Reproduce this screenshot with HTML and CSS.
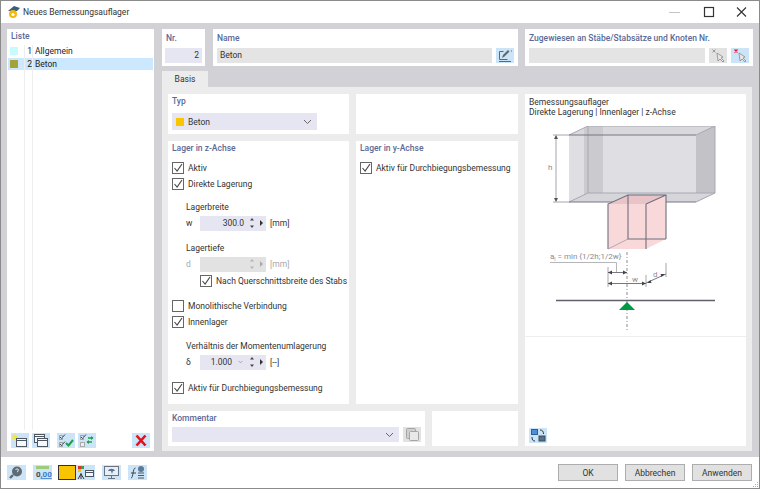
FILE: index.html
```html
<!DOCTYPE html>
<html lang="de">
<head>
    <meta charset="UTF-8">
    <title>Neues Bemessungsauflager</title>
    <link rel="stylesheet" href="styles.css">
</head>
<body>
<svg class="defs" width="0" height="0">
    <symbol id="tick" viewBox="0 0 12 12"><path d="M2.500 6l2.600 3L10 2" fill="none" stroke="#444" stroke-width="1.100"/></symbol>
    <symbol id="updown" viewBox="0 0 8 14"><path d="M4 2L2 4.500h4zM4 12l-2-2.500h4z" fill="currentColor"/></symbol>
    <symbol id="cursor" viewBox="0 0 18 18"><path d="M8 6l1 8 2-2 3 3 1-1-3-3 2-1z" fill="#e8e8e8" stroke="#8a8a8a" stroke-width=".8"/></symbol>
</svg>
<div class="window">
    <!-- title bar -->
    <div class="titlebar">
        <svg class="app-icon" width="14" height="14" viewBox="0 0 14 14">
            <path d="M1 6l6-5 6 2-3 3z" fill="#3a5f7a"/>
            <circle cx="6" cy="9" r="4" fill="#f2b90f"/>
            <circle cx="6" cy="9.500" r="1.600" fill="#fff"/>
        </svg>
        <span class="title">Neues Bemessungsauflager</span>
        <div class="win-btns">
            <svg width="33" height="14" viewBox="0 0 33 14"><path d="M10 7.500h11" stroke="#c4c4c4"/></svg>
            <svg width="33" height="14" viewBox="0 0 33 14"><rect x="12.500" y="2.500" width="9" height="9" fill="none" stroke="#333" stroke-width="1.200"/></svg>
            <svg width="33" height="14" viewBox="0 0 33 14"><path d="M12 2.500l9 9M21 2.500l-9 9" stroke="#333" stroke-width="1.100"/></svg>
        </div>
    </div>

    <div class="main">
        <!-- list on the left -->
        <div class="list-panel">
            <div class="heading">Liste</div>
            <div class="list-row">
                <span class="cell-swatch"><i class="swatch swatch-cyan"></i></span>
                <span class="cell-num">1</span>
                <span class="cell-name">Allgemein</span>
            </div>
            <div class="list-row selected">
                <span class="cell-swatch"><i class="swatch swatch-olive"></i></span>
                <span class="cell-num">2</span>
                <span class="cell-name">Beton</span>
            </div>
            <div class="list-row list-fill">
                <span class="cell-swatch"></span>
                <span class="cell-num"></span>
                <span class="cell-name"></span>
            </div>
            <div class="list-tools">
                <button class="icon-btn">
                    <svg width="18" height="15" viewBox="0 0 18 15"><path d="M4 0l1 2.500L7.500 2 6 4l1.500 2L5 5.500 4 8 3 5.500.5 6 2 4 .5 2 3 2.500z" fill="#f2e640"/><rect x="5.500" y="5.500" width="10" height="8" fill="#f4f8fb" stroke="#4d5560"/><path d="M5.500 7.500h10" stroke="#4d5560"/></svg>
                </button>
                <button class="icon-btn">
                    <svg width="18" height="15" viewBox="0 0 18 15"><rect x="2.500" y="1.500" width="10" height="8" fill="#f4f8fb" stroke="#4d5560"/><path d="M2.500 3.500h10" stroke="#4d5560"/><rect x="5.500" y="5.500" width="10" height="8" fill="#f4f8fb" stroke="#4d5560"/><path d="M5.500 7.500h10" stroke="#4d5560"/></svg>
                </button>
                <button class="icon-btn push">
                    <svg width="18" height="15" viewBox="0 0 18 15"><path d="M3 4l1.500 1.500L8 1.500M3 11l1.500 1.500L8 8.500" fill="none" stroke="#444"/><path d="M2.500 2.500h3v4h-3zM2.500 9.500h3v4h-3z" fill="none" stroke="#888" stroke-width=".7"/><path d="M9 10l2.500 2.500L16 7" fill="none" stroke="#1fa04a" stroke-width="2"/></svg>
                </button>
                <button class="icon-btn">
                    <svg width="18" height="15" viewBox="0 0 18 15"><path d="M3 4l1.500 1.500L8 1.500" fill="none" stroke="#444"/><path d="M2.500 2.500h3v4h-3z" fill="none" stroke="#888" stroke-width=".7"/><rect x="2.500" y="9.500" width="4" height="4" fill="#eee" stroke="#aaa"/><path d="M10 5h5M14 9H9" stroke="#1fa04a" stroke-width="1.500"/><path d="M13 3l2.500 2L13 7zM11 7L8.500 9l2.500 2z" fill="#1fa04a"/></svg>
                </button>
                <button class="icon-btn delete">
                    <svg width="18" height="15" viewBox="0 0 18 15"><path d="M4.500 2.500l9 10M13.500 2.500l-9 10" stroke="#e3101c" stroke-width="2.600"/></svg>
                </button>
            </div>
        </div>

        <div class="content">
            <!-- number, name, assignment -->
            <div class="top-row">
                <div class="box box-nr">
                    <div class="heading">Nr.</div>
                    <div class="field field-nr">2</div>
                </div>
                <div class="box">
                    <div class="heading">Name</div>
                    <div class="field-line">
                        <div class="field field-grey">Beton</div>
                        <button class="icon-btn">
                            <svg width="18" height="15" viewBox="0 0 18 15"><path d="M7.500 3.500h-4v8h8M3 13.500h12" fill="none" stroke="#666"/><path d="M6 10l1-3 5-5 1.500 1.500-5 5z" fill="#666"/><path d="M15.500 2.500v1" stroke="#666"/></svg>
                        </button>
                    </div>
                </div>
                <div class="box">
                    <div class="heading">Zugewiesen an Stäbe/Stabsätze und Knoten Nr.</div>
                    <div class="field-line">
                        <div class="field field-grey"></div>
                        <button class="icon-btn icon-btn-off">
                            <svg width="18" height="15" viewBox="0 0 18 15"><path d="M3.500 1.500l3 3M6.500 1.500l-3 3" stroke="#999"/><use href="#cursor" y="-1" width="18" height="18"/></svg>
                        </button>
                        <button class="icon-btn">
                            <svg width="18" height="15" viewBox="0 0 18 15"><path d="M3.500 1.500l3 3M6.500 1.500l-3 3" stroke="#d8182a" stroke-width="1.300"/><use href="#cursor" y="-1" width="18" height="18"/></svg>
                        </button>
                    </div>
                </div>
            </div>

            <div class="tabs"><div class="tab">Basis</div></div>

            <div class="tab-panel">
                <div class="form-side">
                    <div class="form-grid">
                        <div class="panel">
                            <div class="heading">Typ</div>
                            <div class="select">
                                <i class="swatch swatch-yellow"></i>
                                <span>Beton</span>
                                <svg class="chevron" width="9" height="6" viewBox="0 0 9 6"><path d="M1 1l3.500 3.500L8 1" fill="none" stroke="#666"/></svg>
                            </div>
                        </div>
                        <div class="panel"></div>

                        <div class="panel">
                            <div class="heading">Lager in z-Achse</div>
                            <label class="row first"><i class="check"><svg width="12" height="12"><use href="#tick"/></svg></i>Aktiv</label>
                            <label class="row"><i class="check"><svg width="12" height="12"><use href="#tick"/></svg></i>Direkte Lagerung</label>

                            <div class="row indent mt7">Lagerbreite</div>
                            <div class="row indent">
                                <span class="symbol">w</span>
                                <div class="spin">
                                    <span class="spin-value">300.0</span>
                                    <svg class="updown" width="8" height="14"><use href="#updown"/></svg>
                                    <i class="arrow"></i>
                                </div>
                                <span class="unit">[mm]</span>
                            </div>

                            <div class="row indent mt9">Lagertiefe</div>
                            <div class="row indent disabled">
                                <span class="symbol">d</span>
                                <div class="spin spin-off">
                                    <span class="spin-value"></span>
                                    <svg class="updown" width="8" height="14"><use href="#updown"/></svg>
                                    <i class="arrow"></i>
                                </div>
                                <span class="unit">[mm]</span>
                            </div>
                            <label class="row indent-more mt1"><i class="check"><svg width="12" height="12"><use href="#tick"/></svg></i>Nach Querschnittsbreite des Stabs</label>

                            <label class="row mt9"><i class="check"></i>Monolithische Verbindung</label>
                            <label class="row"><i class="check"><svg width="12" height="12"><use href="#tick"/></svg></i>Innenlager</label>

                            <div class="row indent mt8">Verhältnis der Momentenumlagerung</div>
                            <div class="row indent">
                                <span class="symbol">δ</span>
                                <div class="spin">
                                    <span class="spin-value spin-value-short">1.000</span>
                                    <svg class="spin-chevron" width="9" height="6" viewBox="0 0 9 6"><path d="M1 1l3.500 3.500L8 1" fill="none" stroke="#777"/></svg>
                                    <svg class="updown" width="8" height="14"><use href="#updown"/></svg>
                                    <i class="arrow"></i>
                                </div>
                                <span class="unit">[--]</span>
                            </div>

                            <label class="row mt10"><i class="check"><svg width="12" height="12"><use href="#tick"/></svg></i>Aktiv für Durchbiegungsbemessung</label>
                        </div>

                        <div class="panel">
                            <div class="heading">Lager in y-Achse</div>
                            <label class="row first"><i class="check"><svg width="12" height="12"><use href="#tick"/></svg></i>Aktiv für Durchbiegungsbemessung</label>
                        </div>
                    </div>

                    <div class="form-bottom">
                        <div class="panel panel-comment">
                            <div class="heading">Kommentar</div>
                            <div class="field-line">
                                <div class="select select-wide">
                                    <svg class="chevron" width="9" height="6" viewBox="0 0 9 6"><path d="M1 1l3.500 3.500L8 1" fill="none" stroke="#666"/></svg>
                                </div>
                                <button class="icon-btn icon-btn-off">
                                    <svg width="18" height="15" viewBox="0 0 18 15"><rect x="3.500" y="1.500" width="9" height="10" rx="1" fill="#cfcfcf" stroke="#a5a5a5"/><rect x="6.500" y="4.500" width="9" height="9" rx="1" fill="#e8e8e8" stroke="#a5a5a5"/></svg>
                                </button>
                            </div>
                        </div>
                        <div class="panel panel-blank"></div>
                    </div>
                </div>

                <!-- picture on the right -->
                <div class="panel preview">
                    <div class="preview-title">Bemessungsauflager<br>Direkte Lagerung | Innenlager | z-Achse</div>
                    <svg class="drawing" width="221" height="210" viewBox="525 126 221 210">
                        <path d="M588 126h127v67H588z" fill="#d9d9dd"/>
                        <path d="M569 135l19-9v67l-19 9z" fill="#dadade"/>
                        <path d="M569 135h127v67H569z" fill="#dfdfe3"/>
                        <path d="M584 128l4-2h15v67l-19 4z" fill="#cacacf"/>
                        <path d="M696 135l19-9v67l-19 9z" fill="#c2c2c7"/>
                        <path d="M569 202l19-9h127l-19 9z" fill="#d6d6da"/>
                        <path d="M588 193v-67h127v67M569 202l19-9h127M696 135l19-9M696 202l19-9M569 135l19-9" fill="none" stroke="#a8a8b2"/>
                        <path d="M569 135h127M569 202h127" fill="none" stroke="#77778a" stroke-width="1.200"/>

                        <path d="M608 204l20-9h38v44l-20 10h-38z" fill="#f9d8da"/>
                        <path d="M608 204l20-9h38l-20 9z" fill="#e8c4c8"/>
                        <path d="M608 249v-45l20-9h38v44M646 204v45M646 204l20-9M628 195v44h38" fill="none" stroke="#6f6f80" stroke-width="1.100"/>
                        <path d="M628 239l-20 10" fill="none" stroke="#9a9aa6" stroke-width=".8"/>

                        <path d="M553 135h16M553 202h16M556 136v65" stroke="#a5a5ae" fill="none"/>
                        <path d="M556 135l-2 4h4zM556 202l-2-4h4z" fill="#555"/>
                        <text x="548" y="170" class="dim">h</text>

                        <text x="550" y="259" class="dim">a<tspan class="dim-sub" dy="1.500">l</tspan><tspan dy="-1.500"> = min {1/2h;1/2w}</tspan></text>
                        <path d="M550 262.500h66.500V272" stroke="#b5b5bc" fill="none"/>
                        <path d="M627 252v78" stroke="#8a8a94" stroke-dasharray="3 2 1 2" fill="none"/>
                        <path d="M608 267v20M646 275v12M666 263v14" stroke="#a5a5ae" fill="none"/>
                        <path d="M608 272.500h19M608 283.500h38M646 283l20-9" stroke="#777784" fill="none"/>
                        <path d="M608 272.500l4-2v4zM627 272.500l-4-2v4zM608 283.500l4-2v4zM646 283.500l-4-2v4zM647 283l3.500-3 1 3zM665 274l-3.500 3-1-3z" fill="#444"/>
                        <text x="632" y="282" class="dim">w</text>
                        <text x="653" y="277" class="dim">d</text>
                        <path d="M556 300.500h159" stroke="#5f5f6e" stroke-width="1.500"/>
                        <path d="M627 302l8 8h-16z" fill="#009a44"/>
                    </svg>
                    <div class="preview-bottom">
                        <button class="icon-btn">
                            <svg width="18" height="15" viewBox="0 0 18 15"><rect x="2.500" y="1.500" width="6" height="5" fill="#4f8fd6" stroke="#2f5f9a"/><rect x="10" y="8" width="6" height="5" fill="#59708a" stroke="#3a4a5a"/><path d="M11 2c2.500 0 3.500 1.500 3.500 4M6 13c-2 0-3-1-3-4" fill="none" stroke="#333"/></svg>
                        </button>
                    </div>
                </div>
            </div>
        </div>
    </div>

    <!-- bottom bar -->
    <div class="footer">
        <button class="icon-btn foot-btn">
            <svg width="19" height="15" viewBox="0 0 19 15"><circle cx="10" cy="6.500" r="5" fill="#606a72"/><path d="M6 10l-3 3" stroke="#606a72" stroke-width="2.400"/><path d="M8.500 5c.5-1.500 3-1.500 3 0 0 1-1.200 1-1.200 2.200" fill="none" stroke="#dcecf8"/></svg>
        </button>
        <button class="icon-btn foot-btn foot-gap">
            <svg width="19" height="15" viewBox="0 0 19 15"><rect x="3" y="1" width="13" height="3" fill="#9ccc7c"/><text x="3" y="12" class="zero">0<tspan class="zero-blue">,00</tspan></text></svg>
        </button>
        <span class="color-chip"></span>
        <button class="icon-btn foot-btn foot-gap">
            <svg width="19" height="15" viewBox="0 0 19 15"><rect x="2" y="1" width="3" height="3" fill="#d9352b"/><rect x="5" y="1" width="3" height="3" fill="#38a048"/><rect x="2" y="4" width="3" height="3" fill="#f0c020"/><path d="M5 8v6M2 14l3-5 3 5" fill="none" stroke="#333"/><rect x="9.500" y="5.500" width="8" height="6" fill="#f4f8fb" stroke="#4d5560"/><path d="M9.500 7.500h8" stroke="#4d5560"/></svg>
        </button>
        <button class="icon-btn foot-btn foot-gap">
            <svg width="19" height="15" viewBox="0 0 19 15"><rect x="2.500" y="1.500" width="14" height="9" fill="#e8eef4" stroke="#6a7480"/><path d="M6 6c1-3 6-3 7 0l-2 0-1 3-1-3z" fill="#52779c"/><path d="M9.500 10.500v3M6 13.500h7" stroke="#6a7480"/></svg>
        </button>
        <button class="icon-btn foot-btn">
            <svg width="19" height="15" viewBox="0 0 19 15"><path d="M3 13c2.500 0 1.500-10 4.500-10M3 8h5" fill="none" stroke="#444"/><circle cx="13" cy="4" r="3" fill="#5a7a9c"/><path d="M10 8h6M10 10.500h6M10 13h6" stroke="#555"/></svg>
        </button>
        <div class="footer-btns">
            <button class="btn">OK</button>
            <button class="btn">Abbrechen</button>
            <button class="btn">Anwenden</button>
        </div>
        <svg class="grip" width="6" height="6" viewBox="0 0 6 6"><path d="M4 0h1v1H4zM2 2h1v1H2zM4 2h1v1H4zM0 4h1v1H0zM2 4h1v1H2zM4 4h1v1H4z" fill="#b0b0b0"/></svg>
    </div>
</div>
</body>
</html>
```

FILE: styles.css
```css
html, body {
    margin: 0;
    padding: 0;
    width: 760px;
    height: 489px;
    overflow: hidden;
}

body {
    font-family: Roboto, "Noto Sans", sans-serif;
    font-size: 8.500px;
    color: #333;
}

.defs {
    position: absolute;
}

button {
    font-family: inherit;
    font-size: inherit;
    color: inherit;
    padding: 0;
}

.window {
    box-sizing: border-box;
    width: 760px;
    height: 489px;
    display: flex;
    flex-direction: column;
    border: 1px solid #8a8a8a;
    background: #fff;
}

/* title bar */
.titlebar {
    height: 22px;
    flex: none;
    display: flex;
    align-items: center;
    padding-left: 6px;
    background: #fff;
}

.title {
    margin-left: 2px;
}

.app-icon {
    flex: none;
}

.win-btns {
    margin-left: auto;
    display: flex;
    padding-right: 1px;
}

/* main area */
.main {
    flex: 1;
    min-height: 0;
    display: flex;
    gap: 8px;
    padding: 6px 7px 6px 6px;
    background: #d1d1d6;
}

.heading {
    height: 12px;
    line-height: 12px;
    color: #5a6a98;
    font-weight: 500;
}

.list-panel {
    width: 147px;
    flex: none;
    display: flex;
    flex-direction: column;
    box-sizing: border-box;
    padding: 0 1px 2px 1px;
    background: #fff;
}

.list-panel .heading {
    padding: 1px 3px 3px;
}

.list-row {
    height: 12.500px;
    display: flex;
    line-height: 12px;
    color: #222;
}

.list-row.selected {
    background: #cce8ff;
}

.list-fill {
    flex: 1;
    height: auto;
}

.cell-swatch {
    width: 17px;
    border-right: 1px solid #eee;
    display: flex;
    align-items: center;
    padding-left: 2px;
    box-sizing: border-box;
}

.cell-num {
    width: 8px;
    border-right: 1px solid #eee;
    text-align: right;
    box-sizing: border-box;
}

.cell-name {
    padding-left: 2px;
}

.swatch {
    display: block;
    width: 8px;
    height: 8px;
    flex: none;
}

.swatch-cyan {
    background: #c8fbfb;
}

.swatch-olive {
    background: #a3a33a;
}

.swatch-yellow {
    background: #f9c400;
}

.list-tools {
    display: flex;
    gap: 3px;
    padding: 0 3px 1px;
    margin-top: 3px;
}

.icon-btn {
    width: 18px;
    height: 15px;
    flex: none;
    display: block;
    border: 0;
    background: #cce4f7;
}

.icon-btn svg {
    display: block;
}

.icon-btn-off {
    background: #e2e2e2;
}

.icon-btn.push {
    margin-left: 4px;
}

.icon-btn.delete {
    margin-left: auto;
}

/* right side */
.content {
    flex: 1;
    min-width: 0;
    display: flex;
    flex-direction: column;
}

.top-row {
    flex: none;
    height: 34px;
    display: grid;
    grid-template-columns: 43px 305px 227px;
    column-gap: 8px;
}

.top-row .box:last-child {
    margin-left: -1px;
}

.box {
    box-sizing: border-box;
    padding: 3px 4px;
    background: #fff;
}

.box-nr {
    padding: 3px;
}

.box-nr .heading {
    padding-left: 1px;
}

.field {
    height: 15px;
    line-height: 15px;
    margin-top: 4px;
    padding: 0 3px;
    color: #333;
}

.field-nr {
    background: #e6e6f2;
    text-align: right;
}

.field-grey {
    flex: 1;
    background: #e4e4e4;
}

.field-line {
    display: flex;
    gap: 4px;
    margin-top: 4px;
}

.field-line .field {
    margin-top: 0;
}

.tabs {
    flex: none;
    height: 24px;
    display: flex;
    align-items: flex-end;
}

.tab {
    width: 46px;
    height: 16px;
    line-height: 16px;
    text-align: center;
    background: #ececec;
}

.tab-panel {
    flex: 1;
    min-height: 0;
    display: flex;
    gap: 7px;
    padding: 7px 6px 5px;
    background: #ececec;
}

.form-side {
    width: 350px;
    flex: none;
    display: flex;
    flex-direction: column;
    gap: 7px;
}

.form-grid {
    display: grid;
    grid-template-columns: 181px 162px;
    grid-template-rows: 40px 263px;
    gap: 7px;
}

.form-bottom {
    flex: 1;
    display: flex;
    gap: 7px;
}

.panel {
    box-sizing: border-box;
    background: #fff;
    padding: 1px 4px;
}

.panel-comment {
    width: 257px;
    flex: none;
}

.panel-comment .field-line {
    margin-top: 3px;
}

.panel-blank {
    flex: 1;
}

.select {
    height: 17px;
    width: 145px;
    margin-top: 6px;
    display: flex;
    align-items: center;
    gap: 4px;
    padding: 0 4px;
    box-sizing: border-box;
    background: #e6e6f2;
}

.select-wide {
    flex: 1;
    height: 15px;
    margin-top: 0;
}

.chevron {
    margin-left: auto;
    margin-right: 1px;
}

/* rows in the form */
.row {
    height: 16px;
    display: flex;
    align-items: center;
    color: #333;
    white-space: nowrap;
}

.first {
    margin-top: 6px;
}

.indent {
    padding-left: 14px;
}

.indent-more {
    padding-left: 28px;
}

.mt1 {
    margin-top: 1px;
}

.mt7 {
    margin-top: 7px;
}

.mt8 {
    margin-top: 8px;
}

.mt9 {
    margin-top: 9px;
}

.mt10 {
    margin-top: 10px;
}

.check {
    display: block;
    width: 10px;
    height: 10px;
    flex: none;
    margin-right: 4px;
    border: 1px solid #666;
    background: #fff;
    overflow: hidden;
}

.check svg {
    display: block;
    margin: -1px;
}

.symbol {
    width: 14px;
    flex: none;
}

.spin {
    width: 66px;
    height: 15px;
    flex: none;
    display: flex;
    align-items: center;
    box-sizing: border-box;
    background: #e6e6f2;
}

.spin-off {
    background: #e2e2e2;
}

.spin-value {
    flex: 1;
    text-align: right;
    padding-right: 4px;
}

.spin-value-short {
    flex: none;
    width: 32px;
    padding-right: 0;
}

.spin-chevron {
    margin: 0 5px 0 6px;
}

.updown {
    flex: none;
    color: #444;
    margin-right: 4px;
}

.arrow {
    display: block;
    width: 0;
    height: 0;
    margin-right: 3px;
    border-left: 3px solid #333;
    border-top: 3px solid transparent;
    border-bottom: 3px solid transparent;
}

.unit {
    margin-left: 4px;
}

.disabled {
    color: #a8a8a8;
}

.disabled .updown {
    color: #b5b5b5;
}

.disabled .arrow {
    border-left-color: #aaa;
}

/* preview */
.preview {
    flex: 1;
    min-width: 0;
    padding: 0;
    display: flex;
    flex-direction: column;
}

.preview-title {
    height: 32px;
    padding: 3px 4px 0;
    box-sizing: border-box;
    line-height: 10px;
    color: #333;
}

.drawing {
    display: block;
    flex: none;
}

.dim {
    font-size: 8px;
    fill: #8a8a92;
}

.dim-sub {
    font-size: 5px;
}

.preview-bottom {
    flex: 1;
    display: flex;
    align-items: flex-end;
    padding: 0 0 3px 4px;
    border-top: 1px solid #eee;
}

/* footer */
.footer {
    flex: none;
    height: 31px;
    display: flex;
    align-items: center;
    padding: 0 7px 0 6px;
    background: #fff;
    position: relative;
}

.foot-btn {
    width: 19px;
}

.foot-gap {
    margin-right: 7px;
}

.footer .foot-btn:first-child {
    margin-right: 7px;
}

.footer .foot-btn:nth-child(2) {
    margin-right: 6px;
}

.color-chip {
    width: 18px;
    height: 15px;
    flex: none;
    box-sizing: border-box;
    border: 1px solid #333;
    background: #f9c400;
}

.zero {
    font-size: 8px;
    font-weight: 700;
    fill: #444;
}

.zero-blue {
    fill: #3a78c8;
    text-decoration: underline;
}

.footer-btns {
    margin-left: auto;
    display: flex;
    gap: 7px;
}

.btn {
    width: 60px;
    height: 17px;
    box-sizing: border-box;
    border: 1px solid #adadad;
    background: #e1e1e1;
    line-height: 14px;
}

.grip {
    position: absolute;
    right: 0;
    bottom: 0;
}
```
